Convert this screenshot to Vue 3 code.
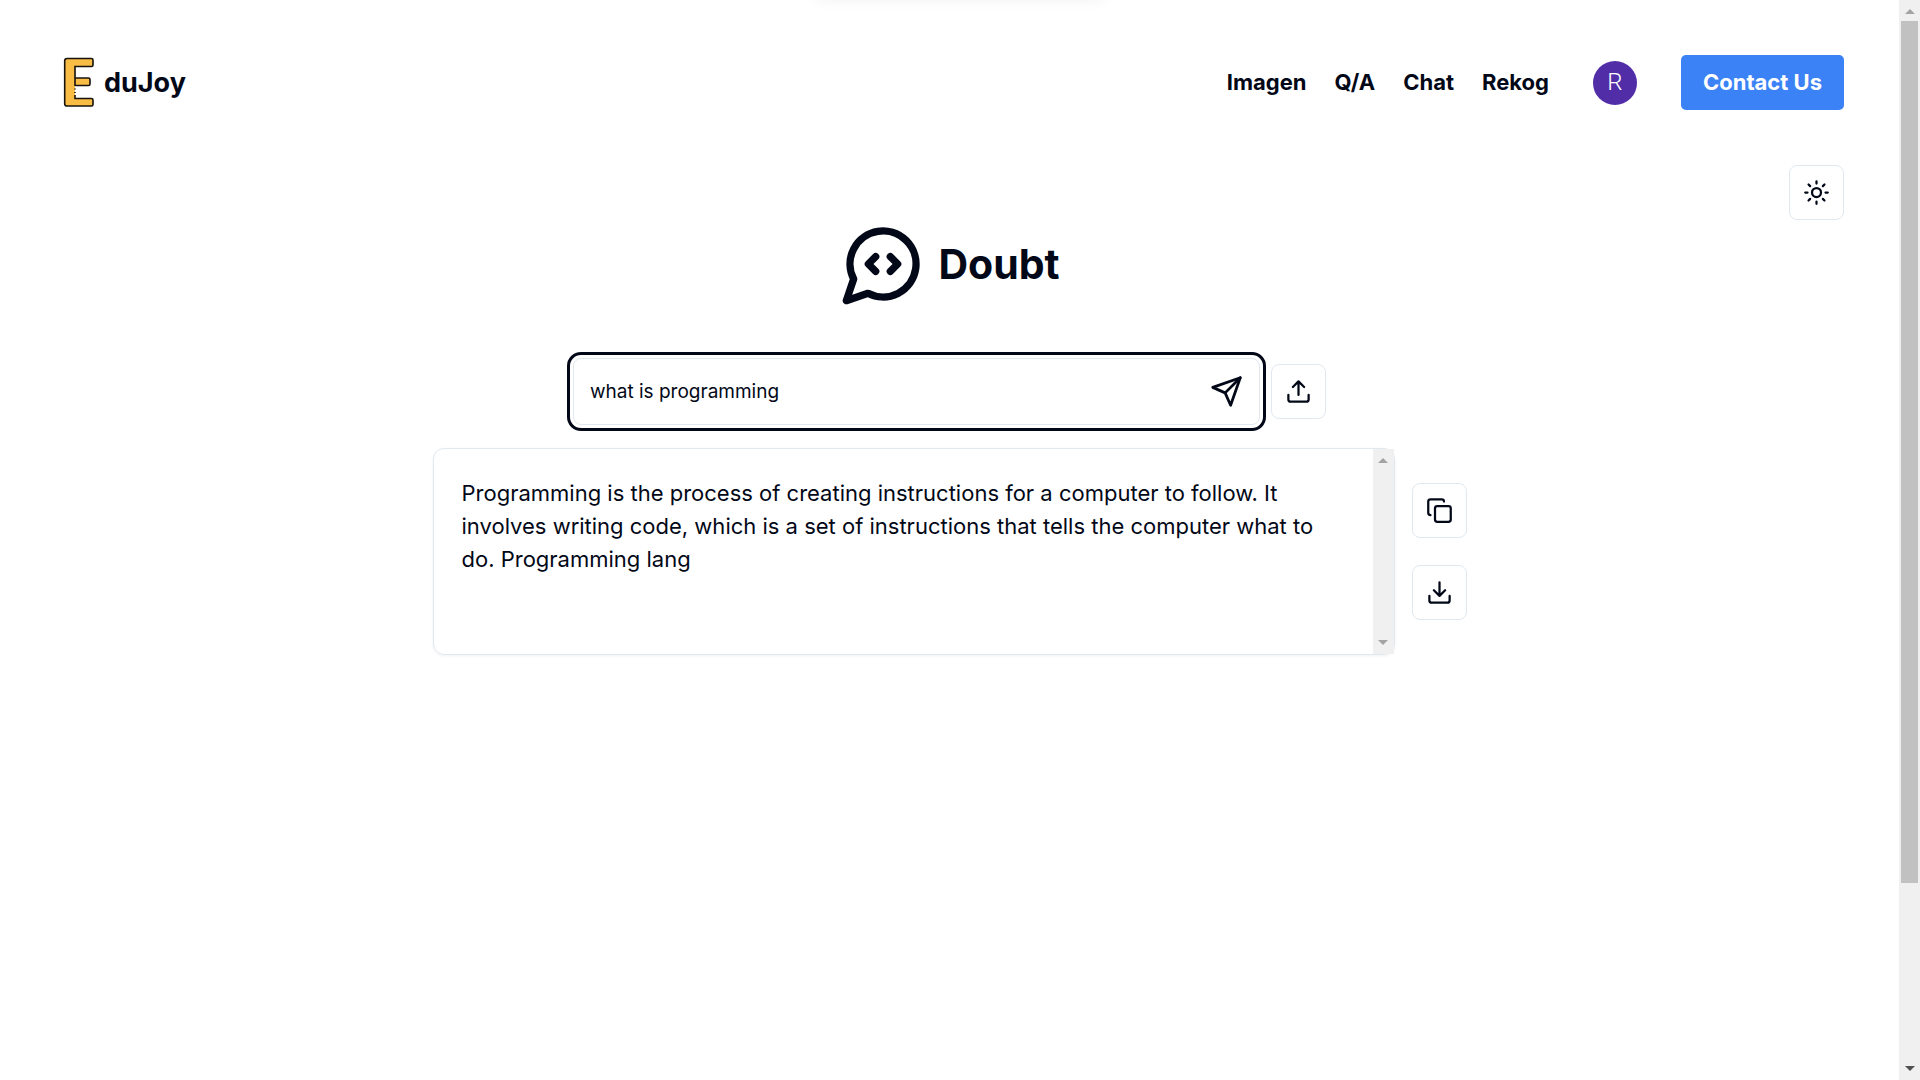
<template>
<div class="page">
  <div class="content">
    <header class="navbar">
      <a href="#" class="brand">
        <svg class="brand-logo" viewBox="0 0 49 55" aria-hidden="true">
          <path class="logo-fill" d="M12 3.5H36.500Q38 3.500 38 5V10Q38 11.500 36.500 11.500H20V23H33.500Q35 23 35 24.500V29Q35 30.500 33.500 30.500H20V43.500H36.500Q38 43.500 38 45V49.500Q38 51 36.500 51H12Q9.700 51 9.700 48.700V5.800Q9.700 3.500 12 3.500Z"/>
          <path class="logo-line" d="M20 31V11.500H36.500Q38 11.500 38 10V5Q38 3.500 36.500 3.500H12Q9.700 3.500 9.700 5.800V48.700Q9.700 51 12 51H36.500Q38 51 38 49.500V45Q38 43.500 36.500 43.500H20V40M20 23H33.500Q35 23 35 24.500V29Q35 30.500 33.500 30.500H20M20 33.500V34.500M20 37V38"/>
        </svg>
        <span>duJoy</span>
      </a>
      <nav class="menu">
        <div class="links">
          <a v-for="link in links" :key="link" href="#">{{ link }}</a>
        </div>
        <button class="avatar" type="button" aria-label="Account">R</button>
        <button class="contact" type="button">Contact Us</button>
      </nav>
    </header>

    <div class="theme-row">
      <button class="icon-btn" type="button" aria-label="Toggle theme">
        <svg class="icon" viewBox="0 0 24 24">
          <circle cx="12" cy="12" r="4"/>
          <path d="M12 2v2M12 20v2M4.930 4.930l1.410 1.410M17.660 17.660l1.410 1.410M2 12h2M20 12h2M6.340 17.660l-1.410 1.410M19.070 4.930l-1.410 1.410"/>
        </svg>
      </button>
    </div>

    <main>
      <div class="title">
        <svg class="icon title-icon" viewBox="0 0 24 24" aria-hidden="true">
          <path d="M7.9 20A9 9 0 1 0 4 16.100L2 22Z"/>
          <path d="m10 10-2 2 2 2M14 10l2 2-2 2"/>
        </svg>
        <h1>Doubt</h1>
      </div>

      <form class="ask" @submit.prevent>
        <div class="field">
          <input v-model="question" type="text" aria-label="Question">
          <button class="send" type="submit" aria-label="Send">
            <svg class="icon" viewBox="0 0 24 24">
              <path d="m22 2-7 20-4-9-9-4Z"/>
              <path d="M22 2 11 13"/>
            </svg>
          </button>
        </div>
        <button class="icon-btn" type="button" aria-label="Upload">
          <svg class="icon" viewBox="0 0 24 24">
            <path d="M21 15v4a2 2 0 0 1-2 2H5a2 2 0 0 1-2-2v-4"/>
            <path d="m17 8-5-5-5 5M12 3v12"/>
          </svg>
        </button>
      </form>

      <div class="result">
        <section class="card">
          <p>{{ answer }}</p>
          <div class="scrollbar" aria-hidden="true">
            <i class="arrow up"></i>
            <i class="arrow down"></i>
          </div>
        </section>
        <div class="actions">
          <button class="icon-btn" type="button" aria-label="Copy">
            <svg class="icon" viewBox="0 0 24 24">
              <rect x="8" y="8" width="14" height="14" rx="2"/>
              <path d="M4 16c-1.100 0-2-.9-2-2V4c0-1.100.9-2 2-2h10c1.100 0 2 .9 2 2"/>
            </svg>
          </button>
          <button class="icon-btn" type="button" aria-label="Download">
            <svg class="icon" viewBox="0 0 24 24">
              <path d="M21 15v4a2 2 0 0 1-2 2H5a2 2 0 0 1-2-2v-4"/>
              <path d="m7 10 5 5 5-5M12 15V3"/>
            </svg>
          </button>
        </div>
      </div>
    </main>
  </div>

  <div class="scrollbar page-scrollbar" aria-hidden="true">
    <i class="arrow up"></i>
    <div class="thumb"></div>
    <i class="arrow down dark"></i>
  </div>
  <div class="top-shadow" aria-hidden="true"></div>
</div>
</template>
<script setup>
import {ref} from 'vue'

const links = ['Imagen', 'Q/A', 'Chat', 'Rekog']

const question = ref('what is programming')
const answer = ref('Programming is the process of creating instructions for a computer to follow. It involves writing code, which is a set of instructions that tells the computer what to do. Programming lang')
</script>

<style>
body {
  margin: 0;
  background: #fff;
}
</style>
<style scoped>
.page {
  display: flex;
  min-height: 100vh;
  overflow: hidden;
  position: relative;
  color: #020817;
  font-family: Inter, "Liberation Sans", sans-serif;
  font-size: 22px;
  line-height: 33px;
}

.page * {
  box-sizing: border-box;
}

.content {
  flex: 1;
  min-width: 0;
}

button,
input {
  font: inherit;
  color: inherit;
}

button {
  cursor: pointer;
  padding: 0;
}

a {
  color: inherit;
  text-decoration: none;
}

/* header */
.navbar {
  display: flex;
  align-items: center;
  justify-content: space-between;
  padding: 55px;
}

.brand {
  display: flex;
  align-items: center;
  font-size: 27px;
  font-weight: 700;
}

.brand-logo {
  width: 49px;
  height: 55px;
}

.logo-fill {
  fill: #f9bc45;
}

.logo-line {
  fill: none;
  stroke: #17120c;
  stroke-width: 1.6;
}

.menu {
  display: flex;
  align-items: center;
  gap: 44px;
}

.links {
  display: flex;
  gap: 28px;
  font-weight: 700;
}

.avatar {
  width: 44px;
  height: 44px;
  border: 0;
  border-radius: 50%;
  background: #512da8;
  color: #fff;
  font-family: Roboto, sans-serif;
  font-size: 24px;
  font-weight: 300;
}

.contact {
  height: 55px;
  padding: 0 22px;
  border: 0;
  border-radius: 5px;
  background: #3b82f6;
  color: #fff;
  font-weight: 700;
}

.theme-row {
  display: flex;
  justify-content: flex-end;
  padding: 0 55px;
}

.icon-btn {
  display: flex;
  align-items: center;
  justify-content: center;
  flex: none;
  width: 55px;
  height: 55px;
  border: 1px solid #e2e8f0;
  border-radius: 8px;
  background: #fff;
}

.icon {
  width: 27px;
  height: 27px;
  fill: none;
  stroke: currentColor;
  stroke-width: 2;
  stroke-linecap: round;
  stroke-linejoin: round;
}

/* question and answer */
main {
  display: flex;
  flex-direction: column;
  align-items: center;
}

.title {
  display: flex;
  align-items: center;
  gap: 11px;
  margin-bottom: 50px;
}

.title-icon {
  width: 88px;
  height: 88px;
}

h1 {
  margin: 0;
  font-size: 41px;
  line-height: 50px;
  font-weight: 700;
}

.ask {
  display: flex;
  align-items: center;
  gap: 11px;
  margin-bottom: 23px;
}

.field {
  display: flex;
  align-items: center;
  width: 687px;
  max-width: 60vw;
  height: 67px;
  padding: 0 16px;
  border: 1px solid #e2e8f0;
  border-radius: 8px;
  outline: 3px solid #020817;
  outline-offset: 3px;
}

.field input {
  flex: 1;
  min-width: 0;
  padding: 0;
  border: 0;
  outline: 0;
  background: transparent;
  font-size: 19px;
}

.send {
  display: flex;
  border: 0;
  background: none;
}

.send .icon {
  width: 33px;
  height: 33px;
}

.result {
  display: flex;
  align-items: center;
  gap: 17px;
}

.card {
  display: flex;
  width: 962px;
  max-width: 80vw;
  min-height: 207px;
  border: 1px solid #e2e8f0;
  border-radius: 11px;
  box-shadow: 0 1px 3px rgba(0, 0, 0, 0.06);
}

.card p {
  flex: 1;
  margin: 0;
  padding: 28px;
}

.actions {
  display: flex;
  flex-direction: column;
  gap: 27px;
}

/* scrollbars */
.scrollbar {
  display: flex;
  flex-direction: column;
  align-items: center;
  justify-content: space-between;
  flex: none;
  width: 21px;
  padding: 9px 0;
  background: #f0f0f0;
}

.page-scrollbar {
  height: 100vh;
}

.thumb {
  width: 17px;
  height: calc(80vh - 2px);
  margin: 7px 0 auto;
  background: #c1c1c1;
}

.arrow {
  border: 5px solid transparent;
}

.up {
  border-top: 0;
  border-bottom-color: #a3a3a3;
}

.down {
  border-bottom: 0;
  border-top-color: #a3a3a3;
}

.dark {
  border-top-color: #505050;
}

/* soft edge of the bar hidden above the page */
.top-shadow {
  position: absolute;
  top: -20px;
  left: 50%;
  width: 290px;
  height: 20px;
  margin-left: -145px;
  border-radius: 8px;
  box-shadow: 0 0 14px rgba(0, 0, 0, 0.06);
}
</style>
